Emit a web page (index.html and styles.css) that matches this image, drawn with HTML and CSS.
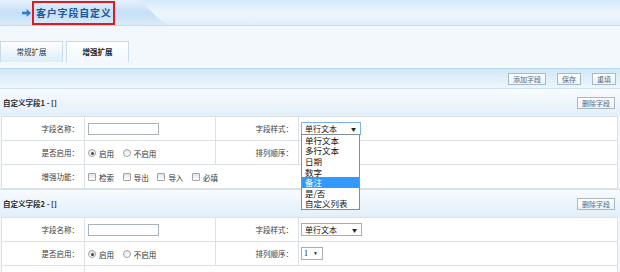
FILE: index.html
```html
<!DOCTYPE html>
<html lang="zh-CN">
<head>
  <meta charset="UTF-8" />
  <title>客户字段自定义</title>
  <link rel="stylesheet" href="styles.css">
</head>
<body>
  <div class="page-head">
    <div class="head-tab">
      <svg class="head-arrow" width="9" height="8" viewBox="0 0 9 8">
        <path d="M0 2.8h4.6V0L9 4 4.6 8V5.2H0z" fill="#2b7bd0"/>
      </svg>
      <h1 class="head-title">客户字段自定义</h1>
    </div>
  </div>

  <div class="tabs">
    <span class="tab">常规扩展</span>
    <span class="tab tab-on">增强扩展</span>
  </div>

  <div class="toolbar">
    <button class="btn">添加字段</button>
    <button class="btn">保存</button>
    <button class="btn">重填</button>
  </div>

  <div class="field-block">
    <div class="block-head">
      <span>自定义字段1 - []</span>
      <button class="btn">删除字段</button>
    </div>
    <table class="field-table">
      <tr>
        <td class="lbl">字段名称：</td>
        <td class="val"><span class="text-input"></span></td>
        <td class="lbl">字段样式：</td>
        <td class="val">
          <span class="select-wrap">
            <span class="select select-focus"><span>单行文本</span><span class="caret">▼</span></span>
            <ul class="dropdown">
              <li>单行文本</li>
              <li>多行文本</li>
              <li>日期</li>
              <li>数字</li>
              <li class="on">备注</li>
              <li>是/否</li>
              <li>自定义列表</li>
            </ul>
          </span>
        </td>
      </tr>
      <tr>
        <td class="lbl">是否启用：</td>
        <td class="val opts">
          <span class="opt"><span class="radio checked"></span>启用</span>
          <span class="opt"><span class="radio"></span>不启用</span>
        </td>
        <td class="lbl">排列顺序：</td>
        <td class="val"></td>
      </tr>
      <tr>
        <td class="lbl">增强功能：</td>
        <td class="val opts" colspan="3">
          <span class="opt"><span class="check"></span>检索</span>
          <span class="opt"><span class="check"></span>导出</span>
          <span class="opt"><span class="check"></span>导入</span>
          <span class="opt"><span class="check"></span>必填</span>
        </td>
      </tr>
    </table>
  </div>

  <div class="field-block">
    <div class="block-head">
      <span>自定义字段2 - []</span>
      <button class="btn">删除字段</button>
    </div>
    <table class="field-table">
      <tr>
        <td class="lbl">字段名称：</td>
        <td class="val"><span class="text-input"></span></td>
        <td class="lbl">字段样式：</td>
        <td class="val"><span class="select"><span>单行文本</span><span class="caret">▼</span></span></td>
      </tr>
      <tr>
        <td class="lbl">是否启用：</td>
        <td class="val opts">
          <span class="opt"><span class="radio checked"></span>启用</span>
          <span class="opt"><span class="radio"></span>不启用</span>
        </td>
        <td class="lbl">排列顺序：</td>
        <td class="val"><span class="select select-small"><span>1</span><span class="caret">▼</span></span></td>
      </tr>
      <tr>
        <td class="lbl"></td>
        <td class="val" colspan="3"></td>
      </tr>
    </table>
  </div>
</body>
</html>
```

FILE: styles.css
```css
body {
  margin: 0;
  background-color: #f3f8fd;
  font-family: "Noto Sans CJK SC", "Noto Sans", sans-serif;
  font-size: 7.5px;
  color: #333;
  overflow: hidden;
}

.page-head {
  height: 25px;
  border-bottom: 1px solid #c4def0;
  background: linear-gradient(#d6eaf9, #eef6fd 55%, #e0eefa);
}

.head-tab {
  display: flex;
  align-items: flex-start;
  width: 170px;
  height: 25px;
  padding-left: 22px;
  box-sizing: border-box;
  background: linear-gradient(#e6f2fc, #c5e0f6 50%, #d9ebf9);
  clip-path: polygon(0 0, 137px 0, 146px 6px, 153px 13px, 160px 20px, 170px 25px, 0 25px);
}

.head-arrow {
  margin-top: 9px;
}

.head-title {
  margin: 1px 0 0 1px;
  height: 20px;
  padding: 0 1px 0 2px;
  border: 2px solid #e01a22;
  font-size: 10px;
  font-weight: 700;
  letter-spacing: 0.8px;
  line-height: 20px;
  color: #1d5796;
}

.tabs {
  display: flex;
  gap: 3px;
  padding: 15px 0 6px 0;
}

.tab {
  width: 61px;
  height: 20px;
  border: 1px solid #c7dbe9;
  border-bottom: none;
  background: linear-gradient(#ffffff, #dcedfa);
  text-align: center;
  line-height: 20px;
  color: #333;
}

.tab-on {
  background: linear-gradient(#ffffff, #f2f8fe);
  font-weight: 700;
  color: #222;
}

.toolbar {
  display: flex;
  justify-content: flex-end;
  align-items: center;
  gap: 11px;
  height: 19px;
  padding-right: 4px;
  border-top: 1px solid #b8daee;
  background: linear-gradient(#d3e8f7, #edf6fc);
}

.btn {
  height: 12px;
  padding: 0 4px;
  border: 1px solid #a9b8c6;
  background: linear-gradient(#ffffff, #edf2f7);
  font-family: inherit;
  font-size: 7px;
  line-height: 10px;
  color: #4d6a86;
}

.field-block {
  position: relative;
}

.block-head {
  display: flex;
  justify-content: space-between;
  align-items: center;
  height: 27px;
  padding: 0 5px 0 3px;
  border-top: 1px solid #cfe1ee;
  background: linear-gradient(#f8fbfe, #e2eff9);
  font-weight: 700;
  color: #2c2c2c;
}

.field-table {
  width: 617px;
  margin-left: 1px;
  border-collapse: collapse;
  background-color: #fff;
}

.field-table td {
  height: 23px;
  padding: 0;
  border: 1px solid #dce1e6;
}

.field-table td.lbl {
  width: 77px;
  padding-right: 5px;
  text-align: right;
  color: #3a3a3a;
}

.field-table tr td:nth-child(2) {
  width: 127px;
  padding-left: 3px;
}

.field-table tr td:nth-child(4) {
  padding-left: 2px;
}

.field-table td.opts {
  padding-left: 6px;
}

.text-input {
  display: block;
  width: 69px;
  height: 10px;
  border: 1px solid #a8b3bd;
  background-color: #fff;
}

.select-wrap {
  position: relative;
  display: inline-block;
  vertical-align: middle;
}

.select {
  display: inline-flex;
  justify-content: space-between;
  align-items: center;
  width: 56px;
  height: 11px;
  padding-left: 3px;
  box-sizing: content-box;
  border: 1px solid #a9adb2;
  background-color: #fff;
  font-size: 8px;
  color: #111;
  vertical-align: middle;
}

.select-focus {
  width: 55px;
  border-color: #7db2e6;
}

.select-small {
  width: 18px;
  padding-left: 2px;
  font-family: "Liberation Serif", serif;
}

.caret {
  padding-right: 4px;
  font-size: 5px;
  color: #222;
}

.dropdown {
  position: absolute;
  top: 12px;
  left: 0;
  z-index: 2;
  width: 57px;
  margin: 0;
  padding: 0;
  list-style: none;
  border: 1px solid #7f8fa0;
  background-color: #fff;
}

.dropdown li {
  height: 10.6px;
  padding-left: 3px;
  font-size: 8.5px;
  line-height: 10.6px;
  color: #111;
}

.dropdown li.on {
  background-color: #3399ff;
  color: #fff;
}

.opt {
  display: inline-flex;
  align-items: center;
  gap: 3px;
  margin-right: 7px;
  vertical-align: middle;
}

.radio {
  width: 6px;
  height: 6px;
  border: 1px solid #a3a3a3;
  border-radius: 50%;
  background: linear-gradient(#e6e6e6, #fff);
  position: relative;
}

.radio.checked::after {
  content: "";
  position: absolute;
  top: 1.5px;
  left: 1.5px;
  width: 3px;
  height: 3px;
  border-radius: 50%;
  background-color: #444;
}

.check {
  width: 6px;
  height: 6px;
  border: 1px solid #a3a3a3;
  border-radius: 1px;
  background: linear-gradient(#e4e4e4, #fff);
}
```
